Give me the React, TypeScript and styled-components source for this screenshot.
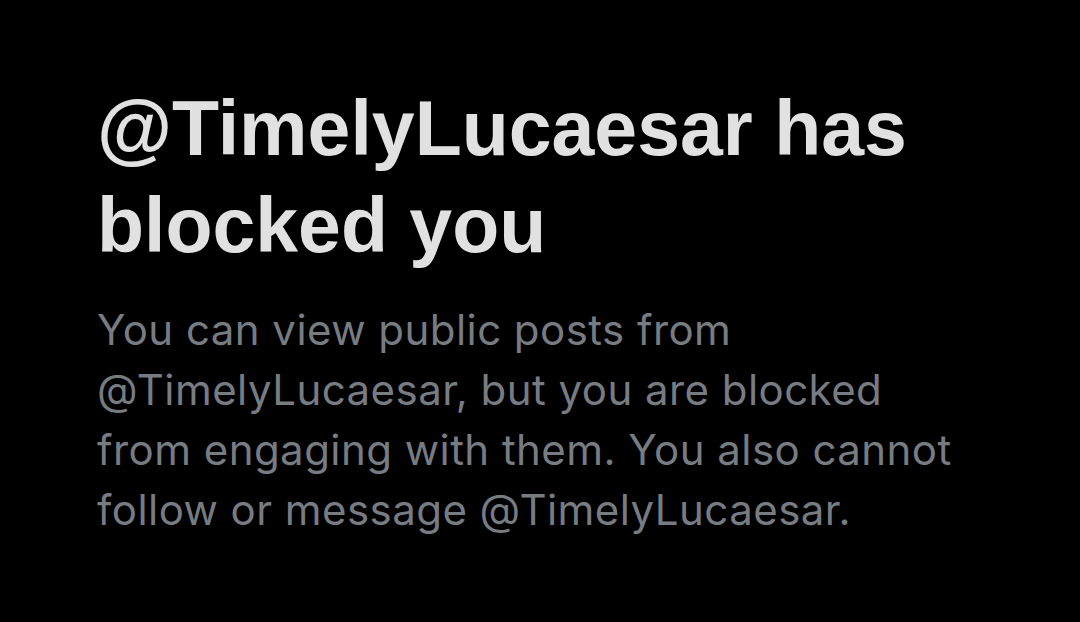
import React from 'react';
import styled, { createGlobalStyle } from 'styled-components';

const GlobalStyle = createGlobalStyle`
    html, body {
        margin: 0;
        background: #000;
    }
`;

const Page = styled.div`
    width: 1080px;
    height: 622px;
    background: #000;
    box-sizing: border-box;
    padding: 80px 60px 0 97px;
    display: flex;
    flex-direction: column;
`;

const Title = styled.h1`
    margin: 0;
    font-family: 'Liberation Sans', Arial, sans-serif;
    font-weight: 700;
    font-size: 77px;
    line-height: 97px;
    color: #e1e1e1;
`;

const Body = styled.p`
    margin: 26px 0 0;
    font-family: Inter, 'Liberation Sans', sans-serif;
    font-weight: 400;
    font-size: 42px;
    line-height: 60px;
    letter-spacing: 0.45px;
    color: #777b82;
    max-width: 872px;
`;

const App: React.FC = () => (
    <>
        <GlobalStyle />
        <Page>
            <Title>@TimelyLucaesar has blocked you</Title>
            <Body>
                You can view public posts from @TimelyLucaesar, but you are blocked from engaging
                with them. You also cannot follow or message @TimelyLucaesar.
            </Body>
        </Page>
    </>
);

export default App;
